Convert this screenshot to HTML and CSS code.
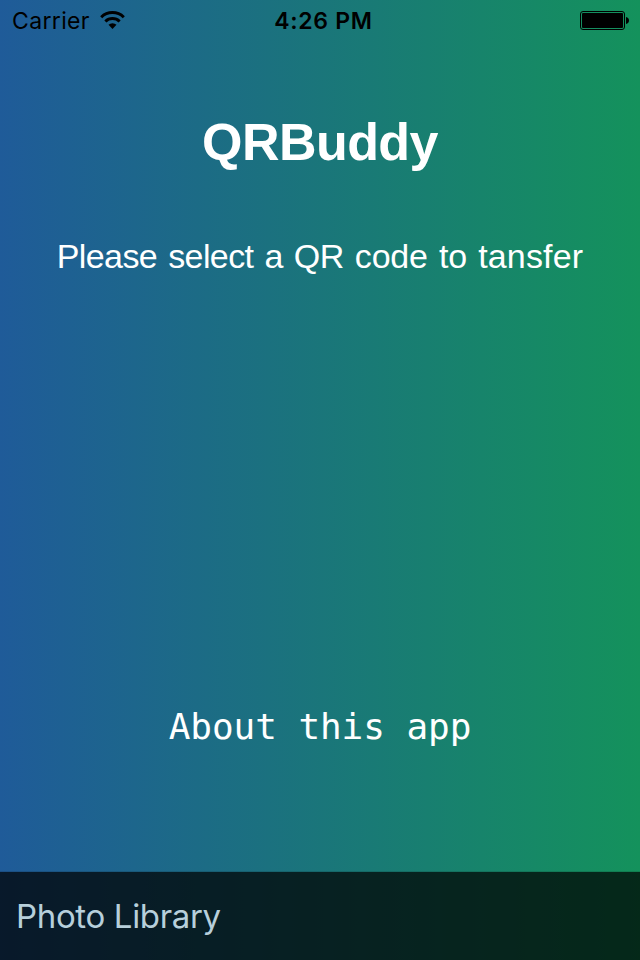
FILE: index.html
```html
<!DOCTYPE html>
<html lang="en">
<head>
<meta charset="utf-8">
<title>QRBuddy</title>
<link rel="stylesheet" href="styles.css">
</head>
<body>
<div class="app">
  <header class="status">
    <div class="carrier"><span class="carrier-name">Carrier</span>
      <svg class="wifi" width="25" height="18" viewBox="0 0 25 18"><g fill="none" stroke="#000" stroke-width="3"><path d="M1.2 6.2a16.2 16.2 0 0 1 22.6 0"/><path d="M5.4 10.5a10.2 10.2 0 0 1 14.2 0"/></g><path d="M12.5 18l-4-4.2a5.8 5.8 0 0 1 8 0z"/></svg>
    </div>
    <time class="clock">4:26 PM</time>
    <svg class="battery" width="49" height="19" viewBox="0 0 49 19"><rect x=".5" y=".5" width="44" height="18" rx="2.5" fill="none" stroke="#000"/><rect x="2" y="2" width="41" height="15" rx="1"/><path d="M46 6c4 .8 4 6.200 0 7z"/></svg>
  </header>
  <main class="content">
    <h1 class="title">QRBuddy</h1>
    <p class="prompt"><span class="tight">Please select a QR</span> code to <span class="wide">tansfer</span></p>
    <a class="about">About this app</a>
  </main>
  <footer class="toolbar"><span class="library">Photo Library</span></footer>
</div>
</body>
</html>
```
FILE: styles.css
```css
* { box-sizing: border-box; }
body { margin: 0; }
.app { width: 640px; height: 960px; display: flex; flex-direction: column; overflow: hidden; color: #fff; font-family: "Liberation Sans", Arial, sans-serif; background: linear-gradient(90deg, #1f5b99, #1b717f 42%, #14925c); }
.status { height: 41px; display: grid; grid-template-columns: 1fr auto 1fr; align-items: center; padding: 0 11px 0 12px; color: #000; font-family: Inter, sans-serif; font-size: 23px; line-height: 41px; }
.carrier { display: flex; align-items: center; gap: 10px; }
.carrier-name { letter-spacing: .35px; padding-top: 1px; line-height: 40px; }
.wifi { margin-top: -1px; }
.clock { font-weight: 600; letter-spacing: .7px; padding: 2px 0 0 6px; line-height: 39px; }
.battery { justify-self: end; }
.content { flex: 1; display: flex; flex-direction: column; align-items: center; white-space: nowrap; }
.title { margin: 69px 0 0; font-size: 52px; line-height: 64px; letter-spacing: -.55px; }
.prompt { margin: 62px 0 0; font-size: 34px; line-height: 40px; letter-spacing: -.2px; word-spacing: 2px; }
.tight { letter-spacing: -.6px; word-spacing: 2.2px; }
.wide { letter-spacing: .15px; }
.about { margin-top: 430px; font: 36px/42px "DejaVu Sans Mono", monospace; letter-spacing: -.06px; }
.toolbar { height: 89px; border-top: 1px solid rgba(0,0,0,.12); background: rgba(0,0,0,.72) padding-box; padding: 0 16px; display: flex; align-items: center; }
.library { font: 33px/40px Inter, sans-serif; letter-spacing: -.35px; color: #b7cfdb; }
```
